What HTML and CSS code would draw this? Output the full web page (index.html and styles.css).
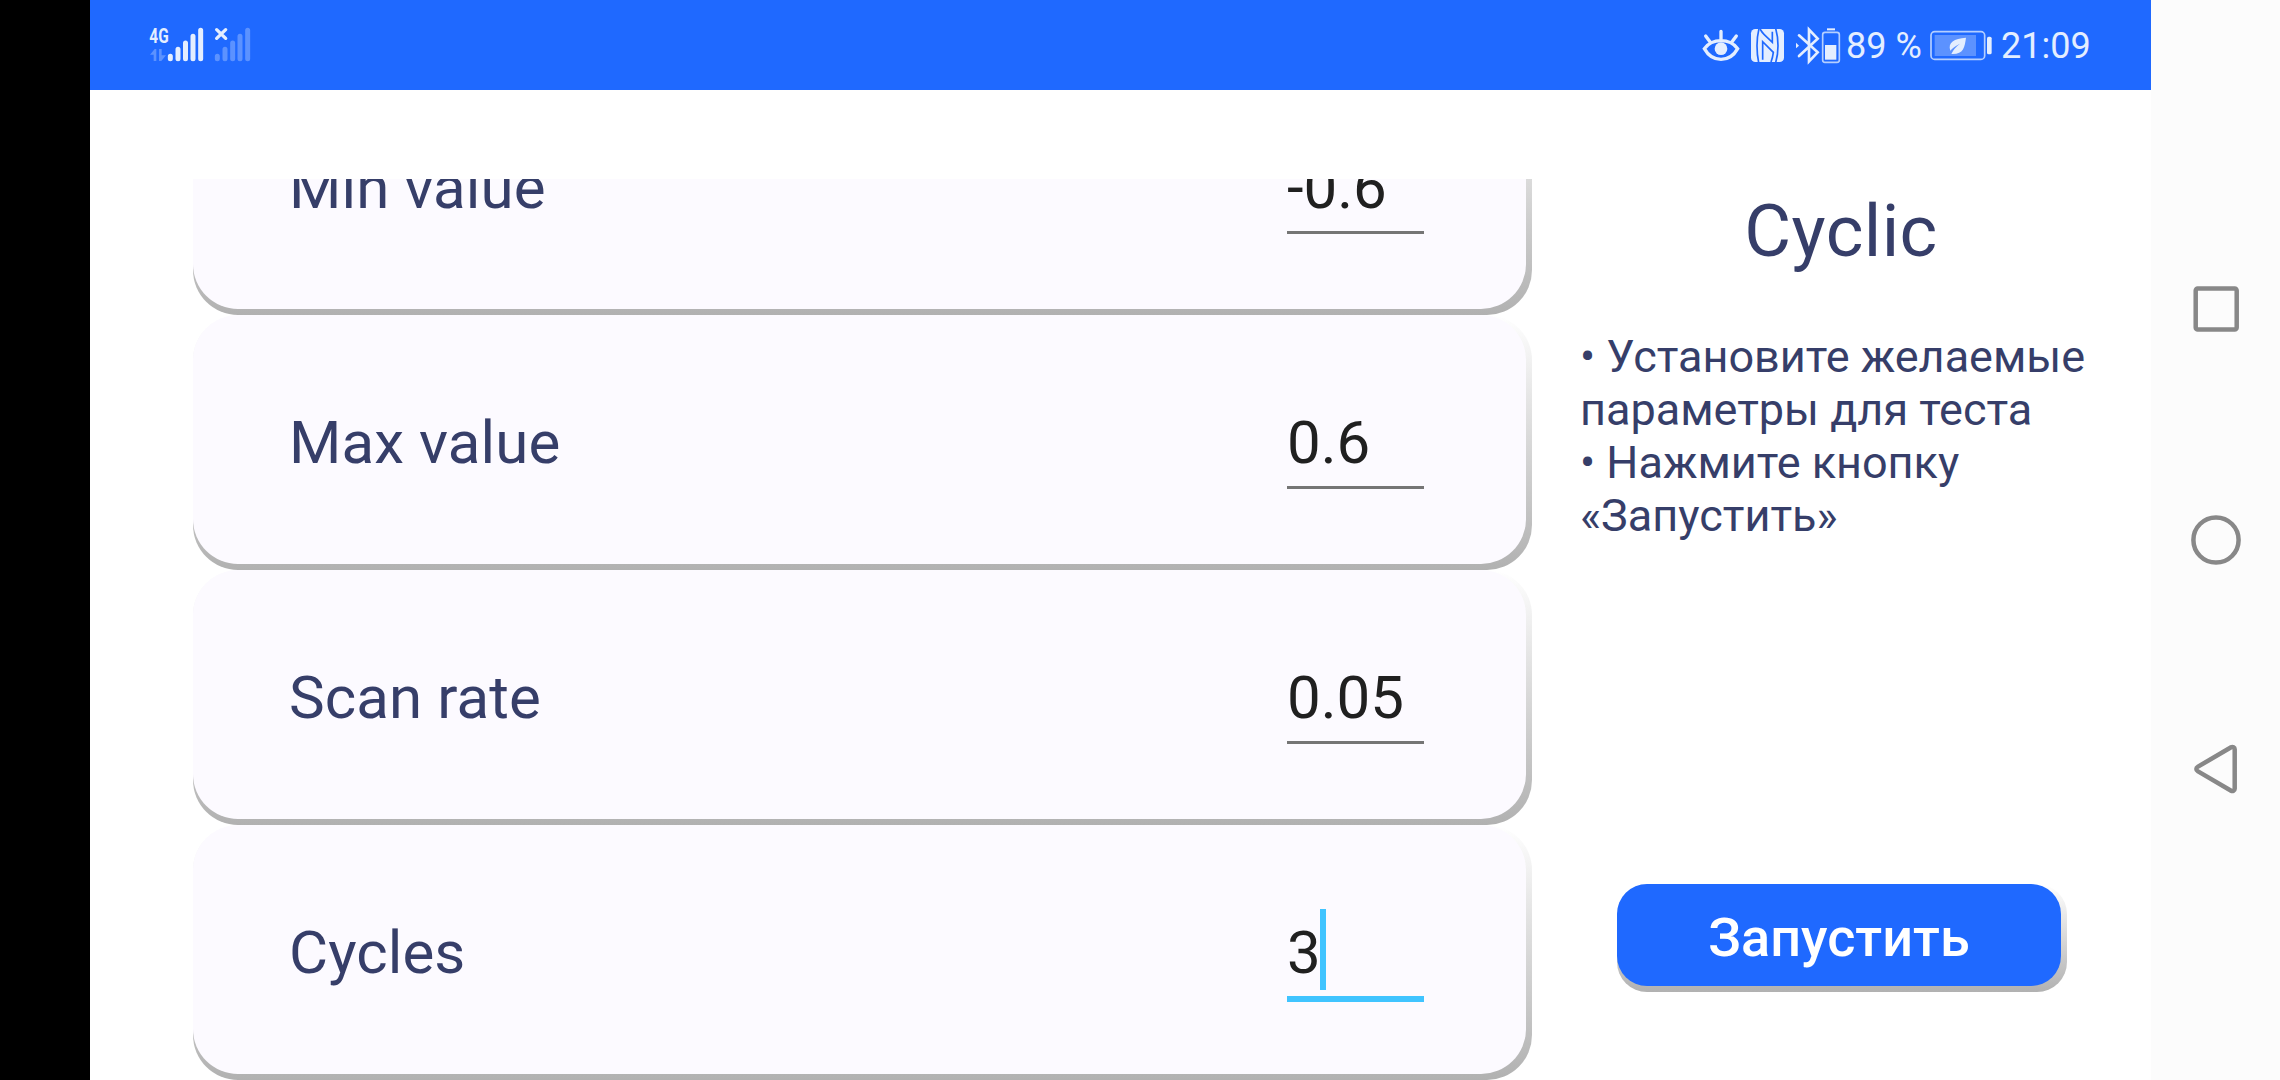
FILE: index.html
```html
<!DOCTYPE html>
<html lang="ru">
<head>
<meta charset="utf-8">
<title>Cyclic</title>
<link rel="stylesheet" href="styles.css">
</head>
<body>
<div class="screen">
  <div class="cutout"></div>
  <div class="app">
    <header class="status-bar">
      <div class="status-group">
        <svg class="icon" width="60" height="90" viewBox="54 -30 180 270">
          <text class="network" x="58" y="99" textLength="58" lengthAdjust="spacingAndGlyphs">4G</text>
          <path class="dim" d="M60 134 74 117h5v36h-8v-19zM87 117h8v19h13l-14 17h-7z"/>
          <path class="bars" d="M121 139v7M144 118v28M166.500 99v47M189 79v67M212 61v85"/>
        </svg>
        <svg class="icon" width="46" height="90" viewBox="234 -30 138 270">
          <path class="cross" d="M260 59l27 26M287 59l-27 26"/>
          <path class="bars bars-dim" d="M262 139v7M285 118v28M308 99v47M330 79v67M353 61v85"/>
        </svg>
      </div>
      <div class="status-group">
        <svg class="icon" width="55" height="90" viewBox="0 -45 165 270">
          <path class="eye" d="M43 101C67 69 119 69 143 101C119 144 67 144 43 101ZM93 76V49M61 82 47 63M125 82l14-19"/>
          <circle cx="93" cy="101" r="19"/>
        </svg>
        <svg class="icon" width="45" height="90" viewBox="165 -45 135 270">
          <rect x="183" y="42" width="99" height="99" rx="13"/>
          <path class="nfc" d="M207 40Q201 65 201 92Q201 119 206 143M257 40Q264 65 264 92Q264 119 257 143"/>
          <path class="nfc" d="M218 134V80L250 112Q248 128 243 141M210 42Q216 52 222 58L247 82V50"/>
        </svg>
        <svg class="icon" width="30" height="90" viewBox="300 -45 90 270">
          <path class="bluetooth" d="M327 61l56 51-26 27V44l26 27-56 52"/>
          <path d="M318 83l9 9-9 8z"/>
        </svg>
        <svg class="icon" width="25" height="90" viewBox="390 -45 75 270">
          <rect x="411" y="40" width="24" height="6"/>
          <rect class="outline" x="398" y="52" width="50" height="90" rx="7"/>
          <rect x="405" y="90" width="34" height="44"/>
        </svg>
        <span class="percent">89 %</span>
        <svg class="icon" width="66" height="90" viewBox="84 -45 198 270">
          <rect class="outline" x="93" y="50" width="161" height="83" rx="11"/>
          <rect class="dim" x="104" y="60" width="124" height="63"/>
          <rect x="261" y="65" width="14" height="53" rx="5"/>
          <path d="M198 68C162 70 143 82 151 107Q159 96 180 86Q162 99 154 117C190 119 194 97 198 68Z"/>
        </svg>
        <span class="clock">21:09</span>
      </div>
    </header>
    <main class="content">
      <section class="params">
        <div class="card"><div class="card-face"><span class="label">Min value</span><span class="field">-0.6</span></div></div>
        <div class="card"><div class="card-face"><span class="label">Max value</span><span class="field">0.6</span></div></div>
        <div class="card"><div class="card-face"><span class="label">Scan rate</span><span class="field">0.05</span></div></div>
        <div class="card"><div class="card-face"><span class="label">Cycles</span><span class="field focused">3<i class="caret"></i></span></div></div>
      </section>
      <aside class="side">
        <h1 class="title">Cyclic</h1>
        <p class="hint">• Установите желаемые<br>параметры для теста<br>• Нажмите кнопку<br>«Запустить»</p>
        <div class="button-shadow"><button class="button">Запустить</button></div>
      </aside>
    </main>
  </div>
  <nav class="nav-bar">
    <svg width="129" height="1080" viewBox="0 0 129 1080">
      <rect x="44.700" y="288.500" width="41" height="41" rx="2"/>
      <circle cx="65" cy="540" r="22.600"/>
      <path d="M46.600 766.900a2.400 2.400 0 0 0 0 4.200l33.500 19.600a2.400 2.400 0 0 0 3.600-2V749.300a2.400 2.400 0 0 0-3.600-2z"/>
    </svg>
  </nav>
</div>
</body>
</html>
```
FILE: styles.css
```css
* { box-sizing: border-box; }
body {
  margin: 0;
  background: #fff;
  font-family: Roboto, "Noto Sans", sans-serif;
  color: #363e69;
}
.screen {
  display: grid;
  grid-template-columns: 90px 2061px 129px;
  width: 2280px;
  height: 1080px;
  overflow: hidden;
}
.cutout { background: #000; }
.app { height: 1080px; display: flex; flex-direction: column; }

.status-bar {
  height: 90px;
  flex: none;
  background: #1f69ff;
  display: flex;
  justify-content: space-between;
  padding: 0 60px 0 58px;
  color: #e4eeff;
  font-size: 36px;
  line-height: 93px;
}
.status-group { display: flex; white-space: nowrap; }
.icon { display: block; flex: none; fill: #e4eeff; }
.network { font: bold 62px Roboto, sans-serif; }
.dim { fill: #5c92ff; }
.bars { fill: none; stroke: #e4eeff; stroke-width: 15; stroke-linecap: round; }
.bars-dim { stroke: #5c92ff; }
.cross { fill: none; stroke: #e4eeff; stroke-width: 10; stroke-linecap: round; }
.eye { fill: none; stroke: #e4eeff; stroke-width: 10; stroke-linecap: round; }
.nfc { fill: none; stroke: #1f69ff; stroke-width: 5; }
.bluetooth { fill: none; stroke: #e4eeff; stroke-width: 8; stroke-linecap: round; }
.outline { fill: none; stroke: #b5cfff; stroke-width: 5; }
.percent { width: 83px; padding-left: 1px; }
.clock { width: 90px; margin-left: 7px; }

.content {
  flex: 1;
  min-height: 0;
  padding: 89px 0 0 103px;
  display: flex;
  gap: 49px;
}
.params {
  width: 1339px;
  flex: none;
  display: flex;
  flex-direction: column;
  justify-content: flex-end;
  overflow: hidden;
}
.card {
  height: 255px;
  flex: none;
  padding: 0 6px 6px 0;
  border-radius: 45px;
  background: linear-gradient(#fff, #b1b1b1);
}
.card-face {
  height: 249px;
  border-radius: 45px;
  background: #fcfaff;
  display: flex;
  justify-content: space-between;
  padding: 84px 102px 0 96px;
  font-size: 60px;
  line-height: 87px;
}
.label { letter-spacing: 0.1px; }
.field {
  display: flex;
  width: 137px;
  height: 90px;
  border-bottom: 3px solid #757575;
  color: #202020;
}
.focused { height: 93px; border-bottom: 6px solid #40c4ff; }
.caret { width: 6px; height: 81px; margin-left: -1px; background: #40c4ff; }

.side { width: 520px; flex: none; display: flex; flex-direction: column; }
.title {
  margin: 11px 0 0;
  font-size: 72px;
  font-weight: 400;
  line-height: 84px;
  letter-spacing: 0.4px;
  text-align: center;
}
.hint { margin: 56px 0 0 -1px; font-size: 45px; line-height: 53px; white-space: nowrap; }
.button-shadow {
  width: 450px;
  height: 108px;
  margin: auto 0 88px 36px;
  padding: 0 6px 6px 0;
  border-radius: 30px;
  background: linear-gradient(#fff, #b1b1b1);
}
.button {
  display: block;
  width: 444px;
  height: 102px;
  padding: 4px 0 0;
  border: 0;
  border-radius: 30px;
  background: #1f69ff;
  color: #fff;
  font: 500 54px Roboto, "Noto Sans", sans-serif;
}

.nav-bar { background: #fcfcfc; }
.nav-bar svg { display: block; fill: none; stroke: #888; stroke-width: 4.500; }
```
